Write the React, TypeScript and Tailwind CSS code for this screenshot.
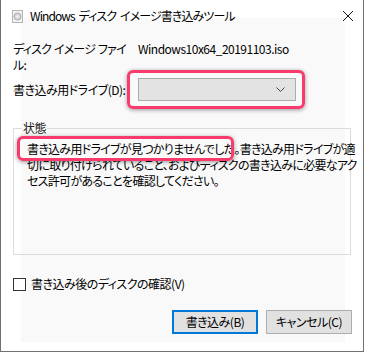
import React from 'react';

// Windows ディスク イメージ書き込みツール dialog

const font = { fontFamily: '"Noto Sans CJK JP", "Noto Sans", sans-serif', fontFeatureSettings: '"palt"' };

function DiscIcon() {
  return (
    <svg width="11" height="13" viewBox="0 0 11 13">
      <rect x="0.5" y="0.5" width="10" height="12" fill="#f2f2f2" stroke="#b5b5b5" />
      <circle cx="5.5" cy="6.5" r="3.5" fill="#d9d9d9" stroke="#9a9a9a" strokeWidth="0.8" />
      <circle cx="5.5" cy="6.5" r="1" fill="#ffffff" />
    </svg>
  );
}

export default function App() {
  return (
    <div className="w-[366px] h-[353px] bg-white text-[12px] text-black tracking-[-0.5px] whitespace-nowrap" style={font}>
      <div className="relative w-[364px] h-[352px] border-l border-r border-b border-[#707070] bg-white">
        {/* slightly darker client backdrop */}
        <div className="absolute left-[20px] top-[18px] w-[324px] h-[324px] bg-[#f9f9f9]" />

        <div className="relative flex flex-col">
          {/* Title bar */}
          <div className="flex items-center h-[32px] pl-[11px] pr-[9px]">
            <DiscIcon />
            <span className="ml-[7px] leading-none tracking-[-0.9px] [word-spacing:2px]">Windows ディスク イメージ書き込みツール</span>
            <svg className="ml-auto" width="12" height="12" viewBox="0 0 12 12">
              <path d="M1 1 L11 11 M11 1 L1 11" stroke="#111" strokeWidth="1" />
            </svg>
          </div>

          {/* Image file */}
          <div className="flex pl-[12px] mt-[9px] leading-[16px]">
            <div className="w-[125px] shrink-0 tracking-[-0.8px] [word-spacing:1px]">
              ディスク イメージ ファイ<br />ル:
            </div>
            <div>Windows10x64_20191103.iso</div>
          </div>

          {/* Drive */}
          <div className="flex items-center pl-[12px] mt-[5px]">
            <div className="w-[125px] shrink-0">書き込み用ドライブ(D):</div>
            <div className="relative">
              <div className="w-[158px] h-[23px] border border-[#adadad] bg-[#e3e3e3] flex items-center justify-end pr-[10px]">
                <svg width="9" height="5" viewBox="0 0 9 5">
                  <path d="M0.5 0.5 L4.5 4.5 L8.5 0.5" fill="none" stroke="#444" strokeWidth="1" />
                </svg>
              </div>
              <div className="absolute left-[-11px] top-[-8px] w-[178px] h-[39px] rounded-[6px] border-[3px] border-[#f83a6c] shadow-[0_1px_4px_rgba(0,0,0,0.4)]" />
            </div>
          </div>

          {/* Status group */}
          <div className="relative mx-[12px] mt-[27px] h-[127px] border border-[#dcdcdc]">
            <span className="absolute left-[8px] top-[-9px] px-[1px] bg-[#f9f9f9] leading-[16px] text-[#222]">状態</span>
            <div className="relative pl-[13px] pt-[12px] leading-[16px] tracking-[-0.7px]">
              書き込み用ドライブが見つかりませんでした。書き込み用ドライブが適<br />
              切に取り付けられていること、およびディスクの書き込みに必要なアク<br />
              セス許可があることを確認してください。
              <div className="absolute left-[3px] top-[7px] w-[217px] h-[25px] rounded-[6px] border-[3px] border-[#f83a6c] shadow-[0_1px_4px_rgba(0,0,0,0.4)]" />
            </div>
          </div>

          {/* Verify checkbox */}
          <div className="flex items-center pl-[12px] mt-[20px]">
            <div className="w-[13px] h-[13px] border border-[#333] bg-white" />
            <span className="ml-[5px]">書き込み後のディスクの確認(V)</span>
          </div>

          {/* Buttons */}
          <div className="flex justify-end gap-[8px] pr-[11px] mt-[17px]">
            <button className="w-[86px] h-[24px] border-2 border-[#0078d7] bg-[#e1e1e1] text-[12px] tracking-[-0.5px]" style={font}>
              書き込み(B)
            </button>
            <button className="w-[86px] h-[24px] border border-[#adadad] bg-[#e1e1e1] text-[12px] tracking-[-0.5px]" style={font}>
              キャンセル(C)
            </button>
          </div>
        </div>
      </div>
    </div>
  );
}
